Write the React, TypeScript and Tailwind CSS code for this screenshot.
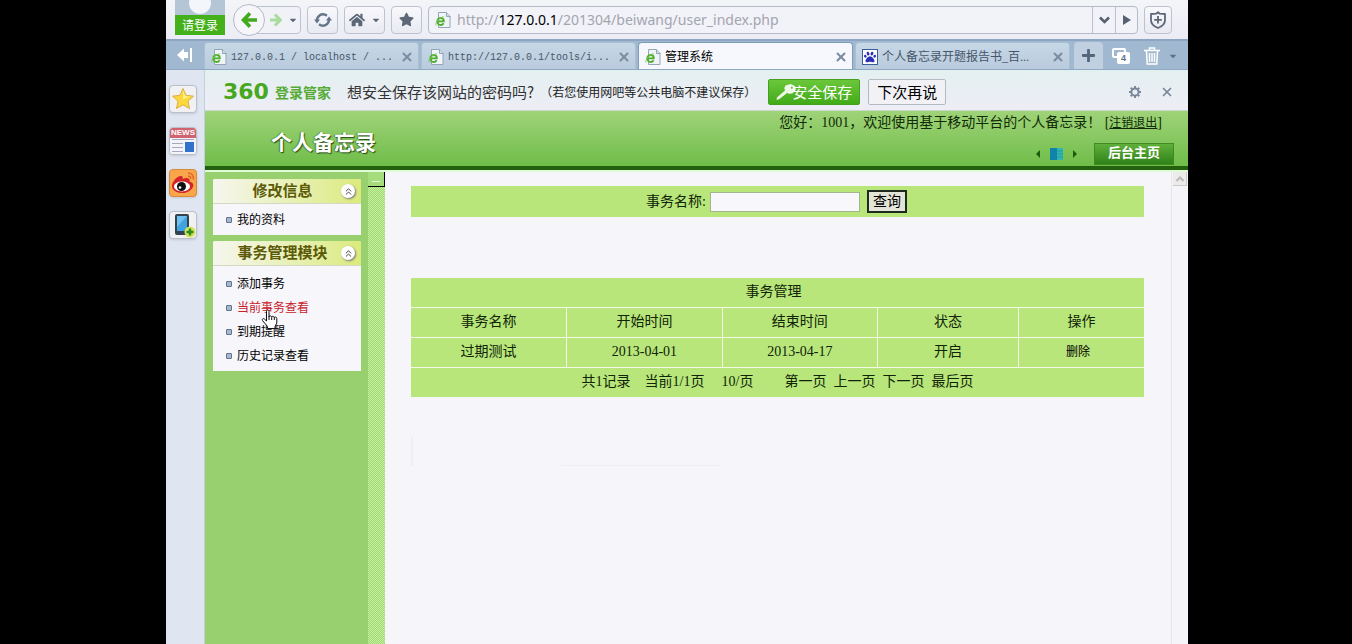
import type { ReactNode } from "react";
import { ChevronsUp, X } from "lucide-react";
import { FaCaretDown, FaHome, FaPaw, FaPlus, FaStar } from "react-icons/fa";

const SONG = "font-['Liberation_Serif','Noto_Sans_CJK_SC',serif]";

const PageIcon = () => (
  <svg width="16" height="16" viewBox="0 0 16 16" className="shrink-0">
    <path d="M3.500 .5h8l3.500 3.500v11.500H3.500z" fill="#eef4f8" stroke="#94a5b6" />
    <path d="M11.500 .5v4h4" fill="#cfdbe6" stroke="#94a5b6" />
    <path
      d="M2.500 9.300h6.300c0-2.100-1.200-3.300-3.100-3.300S2.300 7.300 2.300 9.300s1.400 3.700 3.400 3.700c1.300 0 2.300-.6 2.900-1.700"
      fill="none"
      stroke="#4fae2c"
      strokeWidth="1.800"
    />
    <path d="M1 13.500C0 11 3 7 8.500 4.500" fill="none" stroke="#7cc95a" />
  </svg>
);

const BaiduIcon = () => (
  <span className="flex size-4 shrink-0 items-center justify-center border border-[#3b5f9a] bg-white">
    <FaPaw size={12} color="#2a2fb5" />
  </span>
);

const RefreshIcon = () => (
  <svg width="18" height="16" viewBox="0 0 18 16" fill="none" stroke="#64758a" strokeWidth="2.400">
    <path d="M3 8.500C3 4 7 1.500 11 2.600l2 1" />
    <path d="M15 7.500c0 4.500-4 7-8 5.900l-2-1" />
    <path d="M0 7.500h6L3 11.500zM18 8.500h-6l3-4z" fill="#64758a" stroke="none" />
  </svg>
);

const ShieldIcon = () => (
  <svg width="18" height="18" viewBox="0 0 18 18" fill="none" stroke="#5c6878" strokeWidth="1.800">
    <path d="M9 1.200l1.800 1.500 5.200.3v6c0 4-3 6.500-7 8-4-1.500-7-4-7-8V3l5.200-.3z" strokeLinejoin="round" />
    <path d="M9 5v7.500M5.200 8.800h7.600" />
  </svg>
);

const KeyIcon = () => (
  <svg width="20" height="16" viewBox="0 0 20 16" fill="#eef8e6">
    <path d="M9.500 1.500l5-1.500 4.500 2 .8 4-3.500 3.500-4 .2-1-.9L3.500 15 .5 16l.4-2.600L9 6.500 8.300 4z" />
    <circle cx="15.800" cy="3.800" r="1" fill="#5dbb30" />
  </svg>
);

const GearIcon = () => (
  <svg width="14" height="14" viewBox="0 0 14 14" fill="none" stroke="#7a8799">
    <circle cx="7" cy="7" r="3.600" strokeWidth="2" />
    <path
      d="M7 1v2M7 11v2M1 7h2M11 7h2M2.700 2.700l1.400 1.400M9.900 9.900l1.400 1.400M2.700 11.300l1.400-1.400M9.900 4.100l1.400-1.400"
      strokeWidth="2"
    />
  </svg>
);

const HandCursor = () => (
  <svg width="18" height="20" viewBox="0 0 18 20" className="pointer-events-none absolute left-12 top-[13px] z-10">
    <path
      d="M5.500 12V2.500C5.500 .5 8 .5 8 2.500V8c0-1.500 2.700-1.500 2.700.3 0-1.400 2.600-1.300 2.600.5 0-1.300 2.500-1 2.500.7V14l-1.800 3.500v2H6.500v-2L1.500 11.500c-.8-1.500 1-2.600 2-1.400z"
      fill="#fff"
      stroke="#111"
    />
    <path d="M8 7.500V11M10.700 8.500V11M13.300 9v2" stroke="#111" />
  </svg>
);

const StarIcon = () => (
  <svg width="24" height="24" viewBox="0 0 24 24" className="shrink-0">
    <path
      d="M12 1.500l3.100 6.800 7.400.9-5.500 5 1.500 7.300L12 17.900l-6.500 3.600L7 14.200l-5.500-5 7.400-.9z"
      fill="#fbd93a"
      stroke="#dcae4a"
      strokeLinejoin="round"
    />
    <path d="M12 3.500l2.400 5.400 5 .7-7.400 3z" fill="#fdee85" />
  </svg>
);

const WeiboIcon = () => (
  <svg width="26" height="26" viewBox="0 0 26 26" className="shrink-0">
    <path d="M2 16C2 11 8 5 11.500 6c1.500.5 1.500 2 1 3C17 7 20.500 8 19.500 11.500c3.500 1 4.500 3 3.500 5.500-2 4-7 6.500-12 6C5.500 22.500 2 20 2 16z" fill="#d3242a" />
    <ellipse cx="12" cy="16.500" rx="8" ry="5" fill="#fff" />
    <circle cx="11.500" cy="16.500" r="4.500" fill="#111" />
    <circle cx="10" cy="17.500" r="1.300" fill="#fff" />
    <path d="M18 3c3.500 0 6 2.500 5.300 6.500M18 6c2 0 3 1.200 2.600 3" fill="none" stroke="#e2662a" strokeWidth="1.500" />
  </svg>
);

const PhoneIcon = () => (
  <svg width="26" height="26" viewBox="0 0 26 26" className="shrink-0">
    <rect x="5" y="2" width="14" height="21" rx="2" fill="#33424f" />
    <rect x="7" y="4" width="10" height="15" fill="#3fa3e0" />
    <path d="M7 4h10L7 15z" fill="#6fc0ee" />
    <circle cx="20" cy="20" r="5.500" fill="#d3e45a" />
    <path d="M20 16.500v7M16.500 20h7" stroke="#2f8a1e" strokeWidth="2.400" />
  </svg>
);

const NewsIcon = () => (
  <span className="flex size-full flex-col bg-[#f3f3f8]">
    <span className="h-2.5 bg-[#cf6470] text-center font-['Liberation_Sans',sans-serif] text-[8px] leading-[10px] font-bold text-white">
      NEWS
    </span>
    <svg width="26" height="16" viewBox="0 0 26 16" stroke="#a3a8c4">
      <path d="M2 1.500h22M2 5.500h11M2 9.500h11M2 13.500h11" />
      <path d="M15 4h9v10h-9z" fill="#2f72cc" stroke="none" />
    </svg>
  </span>
);

const ToolButton = ({ label, className, children }: { label: string; className: string; children: ReactNode }) => (
  <button
    aria-label={label}
    className={`${className} flex h-7 shrink-0 items-center justify-center gap-1.5 rounded-sm border border-[#bcc3cf] bg-linear-to-b from-[#f8f8fc] to-[#e9eaf2] text-[#5c6878]`}
  >
    {children}
  </button>
);

interface TabProps {
  title: string;
  icon?: ReactNode;
  active?: boolean;
  mono?: boolean;
}

const Tab = ({ title, icon = <PageIcon />, active, mono }: TabProps) => (
  <div
    className={`flex w-[215px] shrink-0 items-center gap-1 rounded-t-sm border border-b-0 pt-0.5 pr-1 pl-1.5 ${
      active ? "border-[#7f9cbb] bg-[#f7f8fd]" : "border-[#a9bfd4] bg-linear-to-b from-[#c6d7e6] to-[#b9cbdd]"
    }`}
  >
    {icon}
    <a
      href="#"
      className={`flex-1 whitespace-nowrap ${
        mono ? "font-['Liberation_Mono',monospace] text-[10px]" : "font-['Liberation_Serif','Noto_Sans_CJK_SC',sans-serif] text-xs"
      } ${active ? "text-black" : "text-[#46566a]"}`}
    >
      {title}
    </a>
    <button aria-label="关闭标签">
      <X size={14} strokeWidth={3.5} color="#7b8da3" />
    </button>
  </div>
);

const MENUS = [
  { title: "修改信息", items: ["我的资料"] },
  { title: "事务管理模块", items: ["添加事务", "当前事务查看", "到期提醒", "历史记录查看"] },
];

const HOVERED = "当前事务查看";

const DOCK = [
  { label: "收藏", icon: <StarIcon /> },
  { label: "新闻", icon: <NewsIcon /> },
  { label: "微博", icon: <WeiboIcon />, orange: true },
  { label: "手机助手", icon: <PhoneIcon /> },
];

const Toolbar = () => (
  <div className="flex h-[39px] items-center bg-linear-to-b from-[#f4f5f8] to-[#ebecf5] pr-4 pl-[9px]">
    <div className="flex h-full w-[50px] shrink-0 flex-col">
      <div className="h-[15px] overflow-hidden bg-[#b4c6d6]">
        <svg width="50" height="15" viewBox="0 0 50 15">
          <circle cx="25" cy="3" r="11" fill="#f3f6fa" />
        </svg>
      </div>
      <button className="h-5 bg-[#44b01c] font-['Noto_Sans_CJK_SC',sans-serif] text-xs leading-5 text-white">请登录</button>
    </div>
    <div className="ml-2 flex shrink-0 items-center">
      <button
        aria-label="后退"
        className="z-10 flex size-8 items-center justify-center rounded-full border border-[#b3bac6] bg-[#f6f6fa]"
      >
        <svg width="16" height="16" viewBox="0 0 16 16" fill="none" stroke="#43a91e" strokeWidth="3.600">
          <path d="M16 8H3M9 1.300L2.500 8 9 14.700" />
        </svg>
      </button>
      <button
        aria-label="前进"
        className="-ml-4 flex h-7 w-[52px] items-center justify-end gap-1.5 rounded-r-sm border border-[#bcc3cf] bg-[#f1f2f7] pr-0.5 text-[#5c6878]"
      >
        <svg width="12" height="14" viewBox="0 0 12 14" fill="none" stroke="#a9dca0" strokeWidth="3.200">
          <path d="M0 7h10M5 1.500L10.200 7 5 12.500" />
        </svg>
        <FaCaretDown size={10} />
      </button>
    </div>
    <div className="mr-1.5 ml-1.5 flex shrink-0 gap-1.5">
      <ToolButton label="刷新" className="w-[31px]">
        <RefreshIcon />
      </ToolButton>
      <ToolButton label="主页" className="w-[41px]">
        <FaHome size={16} />
        <FaCaretDown size={10} />
      </ToolButton>
      <ToolButton label="收藏" className="w-[31px]">
        <FaStar size={15} />
      </ToolButton>
    </div>
    <div className="flex h-7 flex-1 items-center rounded-sm border border-[#b4bac8] bg-[#f2f2f9]">
      <div className="flex flex-1 items-center gap-1.5 pl-1.5">
        <PageIcon />
        <div className="font-['Noto_Sans',sans-serif] text-sm whitespace-nowrap text-[#a3a5ae]">
          http://<span className="text-black">127.0.0.1</span>/201304/beiwang/user_index.php
        </div>
      </div>
      <button aria-label="展开" className="flex h-full w-[23px] items-center justify-center border-l border-[#bcc3cf]">
        <svg width="11" height="8" viewBox="0 0 11 8" fill="none" stroke="#56606f" strokeWidth="2.600">
          <path d="M1 1.500l4.500 4.500L10 1.500" />
        </svg>
      </button>
      <button aria-label="转到" className="flex h-full w-[22px] items-center justify-center border-l border-[#bcc3cf]">
        <svg width="8" height="10" viewBox="0 0 8 10" fill="#56606f">
          <path d="M0 0l8 5-8 5z" />
        </svg>
      </button>
    </div>
    <div className="ml-1.5">
      <ToolButton label="安全" className="w-7">
        <ShieldIcon />
      </ToolButton>
    </div>
  </div>
);

const TabStrip = () => (
  <div className="flex h-[31px] border-t-2 border-b border-t-[#8ea5c1] border-b-[#8fa8c4] bg-[#a1b8d1]">
    <button aria-label="收起" className="flex w-[38px] shrink-0 items-center justify-center">
      <svg width="16" height="14" viewBox="0 0 16 14" fill="#fff">
        <path d="M0 7l7-6.500V4h4v6H7v3.500zM13 0h2v14h-2z" />
      </svg>
    </button>
    <div className="flex gap-0.5 pt-px">
      <Tab title="127.0.0.1 / localhost / ..." mono />
      <Tab title="http://127.0.0.1/tools/i..." mono />
      <Tab title="管理系统" active />
      <Tab title="个人备忘录开题报告书_百..." icon={<BaiduIcon />} />
    </div>
    <button
      aria-label="新建标签"
      className="mt-px ml-1 flex w-[29px] items-center justify-center rounded-t-sm bg-[#c0d0e0] text-[#55657a]"
    >
      <FaPlus size={15} />
    </button>
    <div className="flex flex-1 items-center justify-end gap-3.5 pt-0.5 pr-2.5">
      <button aria-label="窗口" className="relative h-4 w-[18px]">
        <span className="absolute top-0 left-0 h-2.5 w-3.5 rounded-xs border-2 border-white" />
        <span className="absolute right-0 bottom-0 h-3 w-[13px] rounded-xs bg-white font-['Liberation_Sans',sans-serif] text-[9px] leading-3 font-bold text-[#60728a]">
          4
        </span>
      </button>
      <button aria-label="清理" className="flex items-center gap-2 text-[#5f7188]">
        <svg width="16" height="18" viewBox="0 0 16 18" fill="none" stroke="#fff" strokeWidth="1.500">
          <path d="M0 3.500h16M5.500 3V1h5v2M2.500 4l.7 13h9.600l.7-13M5.500 6v9M8 6v9M10.500 6v9" />
        </svg>
        <FaCaretDown size={10} />
      </button>
    </div>
  </div>
);

const SaveBar = () => (
  <div className="flex h-[41px] items-center border-b border-[#c9d8c8] bg-linear-to-b from-[#e3f0f0] to-[#eeedf6] pt-1 pr-3.5 pl-[18px] font-['Noto_Sans_CJK_SC',sans-serif] whitespace-nowrap">
    <span className="w-12 font-['DejaVu_Sans',sans-serif] text-[22px] leading-5 font-bold text-[#47a81f]">360</span>
    <span className="ml-1 w-[60px] text-sm font-bold text-[#55ab35]">登录管家</span>
    <span className="ml-3 text-[15px] text-[#333]">想安全保存该网站的密码吗?</span>
    <span className="ml-1.5 text-xs text-[#222]">（若您使用网吧等公共电脑不建议保存）</span>
    <button className="ml-3 flex h-[26px] w-[92px] items-center justify-center rounded-xs border border-[#46a01f] bg-linear-to-b from-[#6bc73a] to-[#41ab17] text-[15px] text-white">
      <KeyIcon />
      <span className="-ml-1">安全保存</span>
    </button>
    <button className="ml-2 h-[26px] w-[78px] rounded-xs border border-[#b5b9c1] bg-[#f2f2f6] text-[15px] leading-6 text-black">
      下次再说
    </button>
    <div className="flex flex-1 items-center justify-end gap-[18px]">
      <button aria-label="设置">
        <GearIcon />
      </button>
      <button aria-label="关闭">
        <X size={14} strokeWidth={3} color="#7a8799" />
      </button>
    </div>
  </div>
);

const SiteHeader = () => (
  <header className="z-10 flex h-[59px] items-start justify-between border-b-4 border-[#23610f] bg-linear-to-b from-[#9fd378] to-[#6fbd48] pr-3.5 pl-[66px] shadow-[0_2px_0_#e0fbd8]">
    <h1 className="pt-3.5 font-['Noto_Sans_CJK_SC',sans-serif] text-[21px] leading-8 font-bold text-white [text-shadow:1px_1px_1px_#234d12,-1px_0_1px_#4c7f33]">
      个人备忘录
    </h1>
    <div className={`${SONG} flex flex-col items-end`}>
      <p className="pr-3 text-sm leading-6 whitespace-nowrap text-[#112b08]">
        您好：1001，欢迎使用基于移动平台的个人备忘录！ [
        <a href="#" className="text-xs underline">
          注销退出
        </a>
        ]
      </p>
      <div className="mt-2 flex items-center gap-[17px]">
        <div className="flex items-center gap-2.5">
          <button aria-label="上一个">
            <svg width="4" height="8" viewBox="0 0 4 8" fill="#1c5a10">
              <path d="M4 0v8L0 4z" />
            </svg>
          </button>
          <svg width="13" height="12" viewBox="0 0 13 12">
            <path d="M0 0h13v12H0z" fill="#35b3b0" />
            <path d="M0 0h7v12H0z" fill="#0f83a8" />
            <path d="M7 3h6M7 6h6M7 9h6" stroke="#1d9fa8" />
          </svg>
          <button aria-label="下一个">
            <svg width="4" height="8" viewBox="0 0 4 8" fill="#1c5a10">
              <path d="M0 0v8l4-4z" />
            </svg>
          </button>
        </div>
        <a
          href="#"
          className="h-[22px] w-20 border border-[#3f8a22] bg-linear-to-b from-[#5fb03a] to-[#2f8218] text-center text-[13px] leading-[18px] font-bold text-white"
        >
          后台主页
        </a>
      </div>
    </div>
  </header>
);

const Sidebar = () => (
  <nav className={`${SONG} flex w-[163px] shrink-0 flex-col gap-1.5 bg-[#98d06f] px-2 pt-[9px] pr-[7px]`}>
    {MENUS.map((menu) => (
      <section key={menu.title} className="rounded-t-xs bg-[#f7f6fb]">
        <h2 className="flex h-[25px] items-center rounded-t-xs border-b border-[#d5d9c4] bg-linear-to-r from-[#f6f6ee] to-[#dcea7c] pr-1.5 pl-[11px] text-[15px] font-bold text-[#5c5a08]">
          <span className="flex-1 text-center leading-[22px]">{menu.title}</span>
          <button
            aria-label="折叠"
            className="flex size-3.5 items-center justify-center rounded-full bg-white shadow-[1px_1px_2px_#777]"
          >
            <ChevronsUp size={11} strokeWidth={2} color="#333" />
          </button>
        </h2>
        <ul className={`pb-[3px] ${menu.items.length > 1 ? "pt-1.5" : "pt-1"}`}>
          {menu.items.map((item) => (
            <li key={item} className="relative flex h-6 items-center gap-[5px] pl-[13px] text-xs">
              <span className="size-1.5 rounded-[1px] border border-[#5f7391] bg-[#a9b9cd]" />
              <a href="#" className={item === HOVERED ? "text-[#c8202a]" : "text-black"}>
                {item}
              </a>
              {item === HOVERED && <HandCursor />}
            </li>
          ))}
        </ul>
      </section>
    ))}
  </nav>
);

const CELL = "border border-[#f3f9e6] first:border-l-0 last:border-r-0 p-0 leading-5 font-normal";

const Content = () => (
  <main className={`${SONG} min-w-0 flex-1 bg-[#f6f5fa] pt-4 pr-[27px] pl-[26px] text-sm text-[#0f2408]`}>
    <form className="flex h-[31px] items-center justify-center bg-[#b8e67a] pr-0.5" onSubmit={(e) => e.preventDefault()}>
      <label htmlFor="keyword">事务名称:</label>
      <input id="keyword" className="ml-1 h-5 w-[150px] border border-[#a3b58c] bg-[#f8f8fc] px-1" />
      <button className="ml-[7px] h-[23px] w-10 border-2 border-[#1d2a1d] bg-[#e3e4d8] leading-4 text-black">查询</button>
    </form>

    <table className="mt-[61px] w-full table-fixed border-collapse bg-[#b8e67a] text-center">
      <colgroup>
        <col className="w-[21.2%]" />
        <col className="w-[21.3%]" />
        <col className="w-[21.1%]" />
        <col className="w-[19.3%]" />
        <col />
      </colgroup>
      <thead>
        <tr className="h-[29px]">
          <th colSpan={5} className="pr-2 leading-5 font-normal">
            事务管理
          </th>
        </tr>
        <tr className="h-[30px]">
          {["事务名称", "开始时间", "结束时间", "状态", "操作"].map((name) => (
            <th key={name} className={CELL}>
              {name}
            </th>
          ))}
        </tr>
      </thead>
      <tbody>
        <tr className="h-[30px]">
          <td className={CELL}>过期测试</td>
          <td className={CELL}>2013-04-01</td>
          <td className={CELL}>2013-04-17</td>
          <td className={CELL}>开启</td>
          <td className={CELL}>
            <a href="#" className="text-xs text-black">
              删除
            </a>
            &nbsp;&nbsp;
          </td>
        </tr>
        <tr className="h-[30px]">
          <td colSpan={5} className="leading-5">
            <div className="flex justify-center gap-[7px] whitespace-nowrap">
              <span className="mr-[7px]">共1记录</span>
              <span className="mr-2.5">当前1/1页</span>
              <span className="mr-6">10/页</span>
              <a href="#">第一页</a>
              <a href="#">上一页</a>
              <a href="#">下一页</a>
              <a href="#">最后页</a>
            </div>
          </td>
        </tr>
      </tbody>
    </table>

    <div className="mt-10 flex h-[29px] items-end border-l-2 border-[#ebf1f0] pl-[148px]">
      <div className="h-px w-40 bg-[#efeef3]" />
    </div>
  </main>
);

export default function App() {
  return (
    <div className="min-h-screen bg-black pr-[164px] pl-[166px]">
      <div className="flex min-h-screen flex-col overflow-hidden">
        <Toolbar />
        <TabStrip />
        <div className="flex flex-1">
          <aside className="flex w-[39px] shrink-0 flex-col gap-3.5 border-r border-[#c5cedd] bg-[#dfe6f1] pt-[15px] pl-[3px]">
            {DOCK.map((app) => (
              <button
                key={app.label}
                aria-label={app.label}
                className={`flex size-7 items-center justify-center overflow-hidden rounded-sm border shadow-sm ${
                  app.orange ? "border-[#d98a3c] bg-[#f9a54a]" : "border-[#b9bfcc] bg-[#f1f1f4]"
                }`}
              >
                {app.icon}
              </button>
            ))}
          </aside>
          <div className="flex min-w-0 flex-1 flex-col">
            <SaveBar />
            <SiteHeader />
            <div className="flex flex-1">
              <Sidebar />
              <div className="w-[17px] shrink-0 bg-[#b5e68a] bg-[repeating-conic-gradient(#9fd873_0_25%,#c9f0a0_0_50%)] bg-size-[2px_2px]">
                <button
                  aria-label="隐藏侧栏"
                  className="flex size-[17px] items-end justify-center border-r border-b border-black bg-[#a5dc7c] pb-1"
                >
                  <span className="h-px w-2 bg-[#e8fbd8]" />
                </button>
              </div>
              <Content />
              <div className="w-[17px] shrink-0 border-l border-[#e6e6ea] bg-[#f5f4f8] pt-0.5 pl-px">
                <button
                  aria-label="向上滚动"
                  className="flex size-3.5 items-center justify-center border-r border-b border-[#c9c9c6] bg-[#ecebe9]"
                >
                  <svg width="8" height="6" viewBox="0 0 8 6" fill="none" stroke="#b9b9b6" strokeWidth="2">
                    <path d="M.5 5L4 1.500 7.500 5" />
                  </svg>
                </button>
              </div>
            </div>
          </div>
        </div>
      </div>
    </div>
  );
}
